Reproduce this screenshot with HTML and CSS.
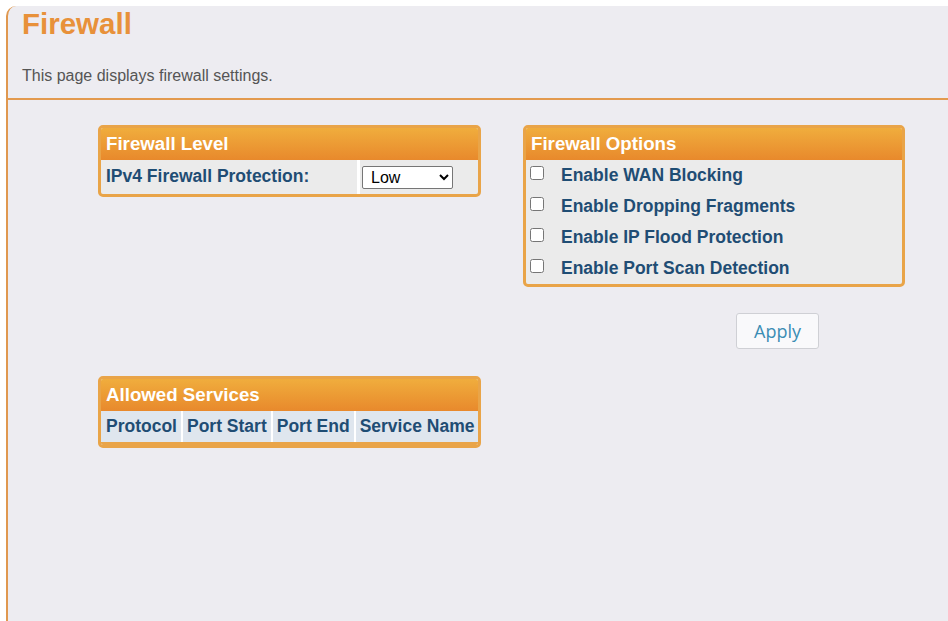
FILE: index.html
```html
<!DOCTYPE html>
<html lang="en">
<head>
    <meta charset="UTF-8">
    <title>Firewall</title>
    <link rel="stylesheet" href="styles.css">
</head>
<body>
    <div class="frame">
        <div class="page-head">
            <h1>Firewall</h1>
            <p>This page displays firewall settings.</p>
        </div>

        <div class="content">
            <div class="col">
                <div class="box">
                    <div class="box-title">Firewall Level</div>
                    <div class="level-row">
                        <div class="level-label">IPv4 Firewall Protection:</div>
                        <div class="level-value">
                            <select id="fwLevel">
                                <option>Low</option>
                                <option>Medium</option>
                                <option>High</option>
                            </select>
                        </div>
                    </div>
                </div>
            </div>

            <div class="col">
                <div class="box">
                    <div class="box-title">Firewall Options</div>
                    <label class="opt"><input type="checkbox"><span>Enable WAN Blocking</span></label>
                    <label class="opt"><input type="checkbox"><span>Enable Dropping Fragments</span></label>
                    <label class="opt"><input type="checkbox"><span>Enable IP Flood Protection</span></label>
                    <label class="opt"><input type="checkbox"><span>Enable Port Scan Detection</span></label>
                </div>
                <button class="apply-btn">Apply</button>
            </div>

            <div class="col">
                <div class="box services">
                    <div class="box-title">Allowed Services</div>
                    <div class="svc-head">
                        <div class="svc-cell">Protocol</div>
                        <div class="svc-cell">Port Start</div>
                        <div class="svc-cell">Port End</div>
                        <div class="svc-cell last">Service Name</div>
                    </div>
                </div>
            </div>
        </div>
    </div>
</body>
</html>
```

FILE: styles.css
```css
body {
    margin: 0;
    background: #ffffff;
    font-family: "Liberation Sans", Arial, sans-serif;
}

.frame {
    margin: 6px 0 0 6px;
    min-height: calc(100vh - 6px);
    background: #edecf1;
    border-left: 2px solid #e0984f;
    border-top-left-radius: 10px;
}

.page-head {
    padding: 0 14px 13px;
    border-bottom: 2px solid #e39a4e;
}

.page-head h1 {
    margin: 0;
    padding-top: 2px;
    font-size: 29.5px;
    line-height: 32px;
    color: #e8913a;
}

.page-head p {
    margin: 27px 0 0;
    font-size: 16px;
    line-height: 18px;
    color: #555555;
}

.content {
    display: grid;
    grid-template-columns: 383px 382px;
    column-gap: 42px;
    row-gap: 27px;
    padding: 25px 0 0 90px;
    align-items: start;
}

.box {
    border: 3px solid #e9a448;
    border-radius: 5px;
    background: #ebebeb;
    overflow: hidden;
}

.box-title {
    height: 32px;
    line-height: 32px;
    padding-left: 5px;
    font-size: 18.7px;
    font-weight: bold;
    color: #ffffff;
    background: linear-gradient(#f0ad3d, #e8892c);
}

.level-row {
    display: flex;
    height: 34px;
    align-items: stretch;
}

.level-label {
    width: 251px;
    padding-left: 5px;
    line-height: 33px;
    font-size: 17.5px;
    font-weight: bold;
    color: #1f4d74;
    border-right: 3px solid #ffffff;
}

.level-value {
    padding: 6px 0 0 2px;
}

.level-value select {
    width: 91px;
    height: 23px;
    font-family: "Liberation Sans", Arial, sans-serif;
    font-size: 16px;
    padding: 0 0 0 4px;
    border: 1px solid #767676;
    border-radius: 2px;
    background: #ffffff;
    color: #000000;
}

.opt {
    display: flex;
    align-items: center;
    height: 31px;
    font-size: 17.5px;
    font-weight: bold;
    color: #1f4d74;
}

.opt input {
    width: 14px;
    height: 14px;
    margin: -5px 17px 0 4px;
}

.apply-btn {
    display: block;
    margin: 26px 0 0 213px;
    width: 83px;
    height: 36px;
    font-family: "Open Sans", sans-serif;
    font-size: 18px;
    color: #3b8db4;
    background: #f9f9fb;
    border: 1px solid #cfd0d5;
    border-radius: 3px;
    cursor: pointer;
}

.svc-head {
    display: flex;
    height: 31px;
    border-bottom: 3px solid #e9a448;
}

.svc-cell {
    padding: 0 4px;
    line-height: 31px;
    font-size: 17.5px;
    font-weight: bold;
    color: #1f4d74;
    background: #dfe6ee;
    border-left: 2px solid #ffffff;
    white-space: nowrap;
}

.svc-cell:first-child {
    border-left: 1px solid #dfe6ee;
}

.svc-cell.last {
    flex: 1;
}
```
